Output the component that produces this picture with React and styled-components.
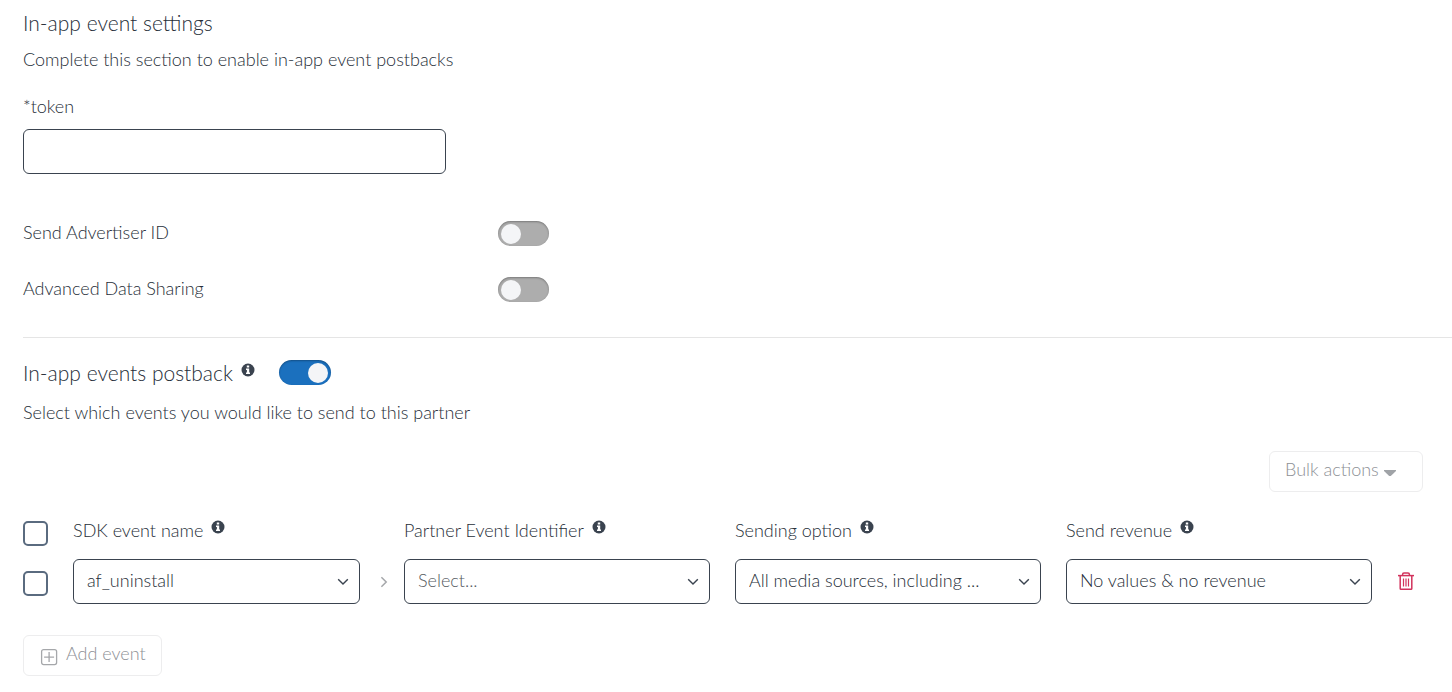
import React, { useState } from 'react';
import styled, { createGlobalStyle } from 'styled-components';

const GlobalStyle = createGlobalStyle`
  * {
    box-sizing: border-box;
  }

  body {
    margin: 0;
    background: #fff;
    color: #262e38;
    font-family: Lato, "Open Sans", sans-serif;
    font-size: 18px;
    font-weight: 300;
    line-height: 24px;
  }

  button, input, select {
    font: inherit;
    color: inherit;
  }
`;

const Page = styled.main`
  padding: 9px 0 16px 23px;
`;

const Title = styled.h2`
  margin: 0;
  font-size: 21px;
  font-weight: 300;
  line-height: 28px;
`;

const Description = styled.p`
  margin: ${(props) => props.$top}px 0 0;
`;

const Field = styled.div`
  display: flex;
  flex-direction: column;
  gap: 11px;
  width: 423px;
  max-width: 100%;
  margin: 23px 0 47px;
`;

const TextInput = styled.input`
  height: 45px;
  padding: 0 13px;
  border: 1px solid #3a434f;
  border-radius: 6px;
  background: #fff;
`;

const SettingRow = styled.div`
  display: flex;
  align-items: center;
  height: 25px;
  margin-bottom: 31px;
`;

const SettingLabel = styled.label`
  flex: 0 0 475px;
  padding-bottom: 3px;
`;

const Switch = styled.input`
  appearance: none;
  display: flex;
  align-items: center;
  justify-content: ${(props) => (props.checked ? 'flex-end' : 'flex-start')};
  width: ${(props) => (props.checked ? 52 : 51)}px;
  height: 25px;
  margin: 0;
  padding: 0 3px;
  border-radius: 13px;
  background: ${(props) => (props.checked ? '#1b70be' : '#adadad')};
  box-shadow: inset 0 1px 2px rgba(0, 0, 0, 0.3);
  cursor: pointer;

  &::before {
    content: '';
    width: 20px;
    height: 20px;
    border-radius: 50%;
    background: #f4f5f7;
  }
`;

const Divider = styled.hr`
  height: 1px;
  margin: 35px 0 22px;
  border: 0;
  background: #e5e5e5;
`;

const PostbackHeader = styled.div`
  display: flex;
  align-items: center;
  gap: 24px;
  height: 25px;
`;

const WithInfo = styled.span`
  display: flex;
  align-items: flex-start;
  gap: 8px;
`;

const InfoSvg = styled.svg`
  flex: none;
  width: 14px;
  height: 14px;
  margin-top: ${(props) => (props.$large ? 4 : 2)}px;
`;

const Events = styled.section`
  margin-right: 29px;
`;

const Toolbar = styled.div`
  display: flex;
  justify-content: flex-end;
  margin: 27px 0 26px;
`;

const OutlineButton = styled.button`
  display: flex;
  align-items: flex-start;
  gap: ${(props) => props.$gap}px;
  height: 41px;
  padding: 5px 15px 0;
  border: 1px solid #ededee;
  border-radius: 6px;
  background: #fff;
  color: #8d9095;

  svg {
    margin-top: 7px;
  }
`;

const BulkButton = styled(OutlineButton)`
  min-width: 154px;
`;

const AddButton = styled(OutlineButton)`
  min-width: 139px;
  padding-left: 16px;
`;

const EventGrid = styled.div`
  display: grid;
  grid-template-columns: 50px repeat(4, minmax(0, 1fr)) 26px;
`;

const HeaderRow = styled(EventGrid)`
  align-items: start;
  height: 41px;
`;

const EventRow = styled(EventGrid)`
  align-items: center;
  margin-bottom: 31px;
`;

const Checkbox = styled.input`
  appearance: none;
  width: 25px;
  height: 25px;
  margin: 3px 0 0;
  border: 2px solid #5a6b7f;
  border-radius: 5px;
  background: #fff;
  cursor: pointer;

  &:checked {
    background: #1b70be;
  }
`;

const SelectCell = styled.div`
  display: flex;
  align-items: center;
  padding-right: ${(props) => (props.$arrow ? 16 : 25)}px;
`;

const SelectBox = styled.div`
  display: grid;
  flex: 1;
  min-width: 0;
  align-items: center;

  > * {
    grid-area: 1 / 1;
  }

  svg {
    justify-self: end;
    margin-right: 11px;
    pointer-events: none;
  }
`;

const Select = styled.select`
  appearance: none;
  width: 100%;
  height: 45px;
  padding: 0 36px 3px 13px;
  border: 1px solid #3a434f;
  border-radius: 6px;
  background: #fff;
  color: ${(props) => (props.$placeholder ? '#555a61' : '#262e38')};
  text-overflow: ellipsis;
`;

const ArrowSvg = styled.svg`
  flex: none;
  margin-left: 20px;
`;

const DeleteButton = styled.button`
  display: flex;
  padding: 0 0 2px 1px;
  border: 0;
  background: none;
  color: #d2335c;
  cursor: pointer;
`;

const InfoIcon = ({ large }) => (
  <InfoSvg $large={large} viewBox="0 0 14 14" aria-hidden="true">
    <circle cx="7" cy="7" r="6.5" fill="#3a434f" />
    <path d="M5.8 2.4h2.4v2H5.8zM5 5.4h3.2v4.2H9v1.5H5V9.6h.9V6.9H5z" fill="#fff" />
  </InfoSvg>
);

const ChevronDown = () => (
  <svg width="12" height="8" viewBox="0 0 12 8" fill="none" aria-hidden="true">
    <path d="M1.2 1.2 6 6l4.8-4.8" stroke="#3a434f" strokeWidth="1.4" />
  </svg>
);

const ChevronRight = () => (
  <ArrowSvg width="8" height="12" viewBox="0 0 8 12" fill="none" aria-hidden="true">
    <path d="M1.4 1.2 6.2 6l-4.8 4.8" stroke="#a5a7aa" strokeWidth="1.5" />
  </ArrowSvg>
);

const CaretDown = () => (
  <svg width="12" height="18" viewBox="0 0 12 18" aria-hidden="true">
    <path d="M0 6h12v1L6.8 12H5.2L0 7z" fill="#a0a3a7" />
  </svg>
);

const PlusBox = () => (
  <svg width="18" height="18" viewBox="0 0 18 18" fill="none" stroke="#a5a7aa" strokeWidth="1.3" aria-hidden="true">
    <rect x="1.6" y="1.6" width="15" height="15" rx="2" />
    <path d="M9.1 4v10M4.1 9.1h10" />
  </svg>
);

const TrashIcon = () => (
  <svg width="16" height="18" viewBox="0 0 16 18" fill="none" stroke="currentColor" aria-hidden="true">
    <path d="M0 3.6h16" strokeWidth="1.5" />
    <path d="M4.6 3.6V2.4Q4.6 1 6 1h4q1.4 0 1.4 1.4v1.2" strokeWidth="1.5" />
    <path d="M2.2 4v12.4q0 .8.8.8h10q.8 0 .8-.8V4" strokeWidth="1.5" />
    <path d="M5.5 6.5v8M8 6.5v8M10.5 6.5v8" strokeWidth="1.2" />
  </svg>
);

const columns = [
  { id: 'sdk', label: 'SDK event name', value: 'af_uninstall', arrow: true },
  { id: 'partner', label: 'Partner Event Identifier', value: 'Select...', placeholder: true },
  { id: 'sending', label: 'Sending option', value: 'All media sources, including ...' },
  { id: 'revenue', label: 'Send revenue', value: 'No values & no revenue' },
];

const App = () => {
  const [advertiserId, setAdvertiserId] = useState(false);
  const [dataSharing, setDataSharing] = useState(false);
  const [postback, setPostback] = useState(true);

  return (
    <Page>
      <GlobalStyle />
      <Title>In-app event settings</Title>
      <Description $top={10}>Complete this section to enable in-app event postbacks</Description>

      <Field>
        <label htmlFor="token">*token</label>
        <TextInput id="token" type="text" />
      </Field>

      <SettingRow>
        <SettingLabel htmlFor="advertiser-id">Send Advertiser ID</SettingLabel>
        <Switch
          id="advertiser-id"
          type="checkbox"
          checked={advertiserId}
          onChange={(e) => setAdvertiserId(e.target.checked)}
        />
      </SettingRow>
      <SettingRow>
        <SettingLabel htmlFor="data-sharing">Advanced Data Sharing</SettingLabel>
        <Switch
          id="data-sharing"
          type="checkbox"
          checked={dataSharing}
          onChange={(e) => setDataSharing(e.target.checked)}
        />
      </SettingRow>

      <Divider />

      {/* In-app events postback */}
      <PostbackHeader>
        <WithInfo>
          <Title as="label" htmlFor="postback">In-app events postback</Title>
          <InfoIcon large />
        </WithInfo>
        <Switch
          id="postback"
          type="checkbox"
          checked={postback}
          onChange={(e) => setPostback(e.target.checked)}
        />
      </PostbackHeader>
      <Description $top={15}>Select which events you would like to send to this partner</Description>

      <Events>
        <Toolbar>
          <BulkButton type="button" $gap={5}>
            Bulk actions
            <CaretDown />
          </BulkButton>
        </Toolbar>

        <HeaderRow>
          <Checkbox type="checkbox" aria-label="Select all events" />
          {columns.map((column) => (
            <WithInfo key={column.id}>
              <label htmlFor={column.id}>{column.label}</label>
              <InfoIcon />
            </WithInfo>
          ))}
        </HeaderRow>

        <EventRow>
          <Checkbox type="checkbox" aria-label="Select event" />
          {columns.map((column) => (
            <SelectCell key={column.id} $arrow={column.arrow}>
              <SelectBox>
                <Select id={column.id} $placeholder={column.placeholder}>
                  <option>{column.value}</option>
                </Select>
                <ChevronDown />
              </SelectBox>
              {column.arrow && <ChevronRight />}
            </SelectCell>
          ))}
          <DeleteButton type="button" aria-label="Delete event">
            <TrashIcon />
          </DeleteButton>
        </EventRow>

        <AddButton type="button" $gap={8}>
          <PlusBox />
          Add event
        </AddButton>
      </Events>
    </Page>
  );
};

export default App;
